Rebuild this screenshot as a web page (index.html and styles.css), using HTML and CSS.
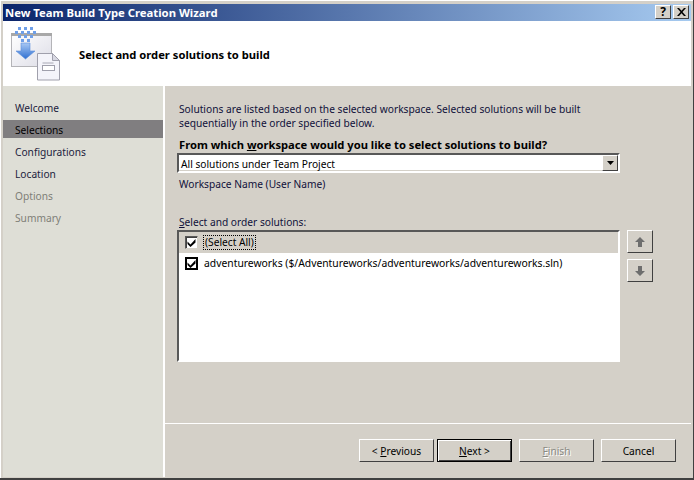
FILE: index.html
```html
<!DOCTYPE html>
<html lang="en">
<head>
<meta charset="utf-8">
<title>New Team Build Type Creation Wizard</title>
<link rel="stylesheet" href="styles.css">
</head>
<body>
<div class="window">
  <div class="titlebar">
    <span class="title">New Team Build Type Creation Wizard</span>
    <div class="caption-buttons">
      <span class="caption-btn">?</span>
      <span class="caption-btn">
        <svg width="9" height="8" viewBox="0 0 9 8"><path d="M0 0h2l2.500 2.700L7 0h2L5.500 4 9 8H7L4.500 5.300 2 8H0l3.500-4z" fill="#000"/></svg>
      </span>
    </div>
  </div>
  <header class="header">
    <svg class="logo" width="50" height="54" viewBox="0 0 50 54">
      <defs>
        <linearGradient id="pane" x1="0" y1="0" x2="1" y2="1"><stop offset="0" stop-color="#fff"/><stop offset="1" stop-color="#dcdce6"/></linearGradient>
        <linearGradient id="arrow" x1="0" y1="0" x2="0" y2="1"><stop offset="0" stop-color="#a8c8f4"/><stop offset="1" stop-color="#2f6fd0"/></linearGradient>
      </defs>
      <rect x="0.500" y="6.500" width="40" height="33" fill="url(#pane)" stroke="#b4b4b8"/>
      <rect x="0" y="6" width="41" height="3" fill="#a8a8a8"/>
      <g fill="#6f9fe8">
        <rect x="7" y="0" width="3" height="3"/><rect x="13" y="0" width="3" height="3"/><rect x="19" y="0" width="3" height="3"/>
        <rect x="4" y="4" width="3" height="3"/><rect x="10" y="4" width="3" height="3"/><rect x="16" y="4" width="3" height="3"/><rect x="22" y="4" width="3" height="3"/>
        <rect x="7" y="8" width="3" height="3"/><rect x="13" y="8" width="3" height="3"/><rect x="19" y="8" width="3" height="3"/>
        <rect x="10" y="12" width="3" height="3"/><rect x="16" y="12" width="3" height="3"/>
      </g>
      <path d="M10 16h9v8h5L14.500 32 5 24h5z" fill="url(#arrow)" stroke="#5b8fdc" stroke-width=".6"/>
      <path d="M26.500 26.500h15l7 7v19.500h-22z" fill="#f4f4fa" stroke="#a0a0ac"/>
      <path d="M41.500 26.500v7h7z" fill="#d8d8e2" stroke="#a0a0ac"/>
      <rect x="31.500" y="35.500" width="11" height="1" fill="#a8a8b4"/>
      <rect x="31.500" y="38.500" width="12" height="5" fill="#fff" stroke="#a0a0ac"/>
    </svg>
    <h1 class="header-title">Select and order solutions to build</h1>
  </header>
  <div class="body">
    <nav class="nav">
      <div class="nav-item">Welcome</div>
      <div class="nav-item selected">Selections</div>
      <div class="nav-item">Configurations</div>
      <div class="nav-item">Location</div>
      <div class="nav-item muted">Options</div>
      <div class="nav-item muted">Summary</div>
    </nav>
    <main class="main">
      <div class="content">
        <p class="intro">Solutions are listed based on the selected workspace. Selected solutions will be built sequentially in the order specified below.</p>
        <div class="question">From which <u>w</u>orkspace would you like to select solutions to build?</div>
        <div class="combo">
          <span class="combo-text">All solutions under Team Project</span>
          <span class="combo-btn"><svg width="7" height="4" viewBox="0 0 7 4"><path d="M0 0h7L3.500 4z" fill="#000"/></svg></span>
        </div>
        <div class="workspace">Workspace Name (User Name)</div>
        <div class="list-label"><u>S</u>elect and order solutions:</div>
        <div class="list-row-wrap">
          <div class="list">
            <div class="row row-all">
              <span class="check"><svg width="9" height="9" viewBox="0 0 9 9"><path d="M0.500 3.500l3 3L8.500 1v3.500L3.500 9 0.500 6z" fill="#000"/></svg></span>
              <span class="focus-label">(Select All)</span>
            </div>
            <div class="row">
              <span class="check"><svg width="9" height="9" viewBox="0 0 9 9"><path d="M0.500 3.500l3 3L8.500 1v3.500L3.500 9 0.500 6z" fill="#000"/></svg></span>
              <span class="row-label">adventureworks ($/Adventureworks/adventureworks/adventureworks.sln)</span>
            </div>
          </div>
          <div class="order-btns">
            <span class="order-btn"><svg width="10" height="10" viewBox="0 0 10 10"><path d="M5 0l5 5H7v5H3V5H0z" fill="#6e6e6e"/></svg></span>
            <span class="order-btn"><svg width="10" height="10" viewBox="0 0 10 10"><path d="M3 0h4v5h3l-5 5-5-5h3z" fill="#6e6e6e"/></svg></span>
          </div>
        </div>
      </div>
      <footer class="footer">
        <span class="btn"><span>&lt; <u>P</u>revious</span></span>
        <span class="btn default"><span><u>N</u>ext &gt;</span></span>
        <span class="btn disabled"><span><u>F</u>inish</span></span>
        <span class="btn"><span>Cancel</span></span>
      </footer>
    </main>
  </div>
</div>
</body>
</html>
```

FILE: styles.css
```css
* { box-sizing: border-box; }
html, body { margin: 0; padding: 0; }
body {
  width: 694px;
  height: 480px;
  overflow: hidden;
  background: #d4d0c8;
  font-family: "Noto Sans", "Liberation Sans", sans-serif;
  font-size: 10.200px;
  color: #000;
}
.window {
  width: 694px;
  height: 480px;
  padding: 4px 2px 1px 3px;
  background: #d4d0c8;
  border-right: 1px solid #404040;
  border-bottom: 2px solid #404040;
  display: flex;
  flex-direction: column;
  box-shadow: inset 1px 1px 0 #fff;
}
.titlebar {
  height: 17px;
  flex: none;
  display: flex;
  align-items: flex-start;
  justify-content: space-between;
  padding: 1px 2px 0 2px;
  background: linear-gradient(90deg, #0a246a, #a6caf0);
}
.title {
  color: #fff;
  font-weight: 700;
  font-size: 11.300px;
  line-height: 15px;
}
.caption-buttons { display: flex; gap: 2px; }
.caption-btn {
  width: 16px;
  height: 14px;
  display: flex;
  align-items: center;
  justify-content: center;
  background: #d4d0c8;
  font-weight: 700;
  font-size: 12px;
  line-height: 1;
  border: 1px solid;
  border-color: #fff #404040 #404040 #fff;
}
.header {
  height: 65px;
  flex: none;
  background: #fff;
  display: flex;
  align-items: center;
  padding-left: 8px;
  gap: 18px;
}
.logo { flex: none; align-self: flex-start; margin-top: 6px; }
.header-title {
  margin: 0;
  font-size: 11.200px;
  font-weight: 700;
  padding-top: 1px;
}
.body {
  flex: 1;
  display: flex;
  min-height: 0;
}
.nav {
  width: 162px;
  flex: none;
  background: #deded6;
  border-right: 2px solid #fff;
  padding-top: 11px;
}
.nav-item {
  height: 22px;
  padding: 0 12px;
  line-height: 22px;
  color: #1c1c3c;
}
.nav-item.selected {
  height: 18px;
  margin: 1px 0 3px;
  line-height: 20px;
  background: #807e80;
  color: #000;
}
.nav-item.muted { color: #7e7e78; }
.main {
  flex: 1;
  min-width: 0;
  display: flex;
  flex-direction: column;
  background: #d4d0c8;
}
.content {
  flex: 1;
  padding: 17px 0 0 14px;
}
.intro {
  margin: 0;
  width: 425px;
  line-height: 13.500px;
  color: #10103a;
}
.question {
  margin-top: 8px;
  font-weight: 700;
  font-size: 11.200px;
  line-height: 14px;
}
.combo {
  margin: 1px 0 0 -2px;
  width: 443px;
  height: 20px;
  display: flex;
  align-items: center;
  justify-content: space-between;
  background: #fff;
  border: 2px solid;
  border-color: #585858 #fff #fff #585858;
  box-shadow: inset -1px -1px 0 #d4d0c8;
}
.combo-text { padding: 1px 0 0 2px; line-height: 16px; }
.combo-btn {
  width: 16px;
  height: 16px;
  display: flex;
  align-items: center;
  justify-content: center;
  background: #d4d0c8;
  border: 1px solid;
  border-color: #fff #404040 #404040 #fff;
}
.workspace {
  margin-top: 4px;
  line-height: 14px;
  color: #10103a;
}
.list-label {
  margin-top: 24px;
  line-height: 14px;
  color: #10103a;
}
.list-row-wrap {
  display: flex;
  align-items: flex-start;
  gap: 7px;
  margin: 1px 0 0 -2px;
}
.list {
  width: 443px;
  height: 132px;
  background: #fff;
  border: 2px solid;
  border-color: #585858 #fff #fff #585858;
}
.row {
  height: 20px;
  display: flex;
  align-items: center;
  padding-left: 6px;
  gap: 6px;
}
.row-all { height: 21px; background: #d4d0c8; }
.check {
  width: 13px;
  height: 13px;
  display: flex;
  align-items: center;
  justify-content: center;
  background: #fff;
  border: 2px solid #000;
}
.row-all .check { border-color: #585858 #d4d0c8 #d4d0c8 #585858; border-width: 1px; box-shadow: inset 1px 1px 0 #404040; }
.focus-label { outline: 1px dotted #000; line-height: 13px; padding: 0 1px; }
.row-label { line-height: 14px; font-size: 10.350px; }
.order-btns { display: flex; flex-direction: column; gap: 6px; }
.order-btn {
  width: 26px;
  height: 23px;
  display: flex;
  align-items: center;
  justify-content: center;
  background: #d4d0c8;
  border: 1px solid;
  border-color: #fff #404040 #404040 #fff;
}
.footer {
  height: 54px;
  flex: none;
  border-top: 1px solid #fff;
  display: flex;
  justify-content: flex-end;
  gap: 7px;
  padding: 15px 15px 0 0;
}
.btn {
  width: 75px;
  height: 23px;
  display: flex;
  align-items: center;
  justify-content: center;
  background: #d4d0c8;
  border: 1px solid;
  border-color: #fff #404040 #404040 #fff;
}
.btn:first-child { margin-right: -4px; }
.default {
  border-color: #000;
  box-shadow: inset 1px 1px 0 #fff, inset -1px -1px 0 #404040;
}
.disabled { color: #8a8a84; text-shadow: 1px 1px 0 #fff; }
```
